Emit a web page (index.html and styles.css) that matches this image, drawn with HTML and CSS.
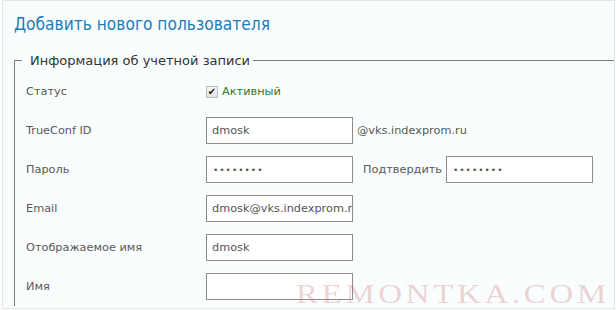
FILE: index.html
```html
<!DOCTYPE html>
<html lang="ru">

<head>
    <meta charset="UTF-8">
    <meta name="viewport" content="width=device-width, initial-scale=1.0">
    <title>Добавить нового пользователя</title>
    <link rel="stylesheet" href="styles.css">
</head>

<body>
    <div class="page">
        <h1 class="title">Добавить нового пользователя</h1>

        <fieldset class="account">
            <legend>Информация об учетной записи</legend>

            <div class="row">
                <label class="caption">Статус</label>
                <label class="check"><span class="box">&#10004;</span>Активный</label>
            </div>
            <div class="row">
                <label class="caption">TrueConf ID</label>
                <input class="field" type="text" value="dmosk">
                <span class="suffix">@vks.indexprom.ru</span>
            </div>
            <div class="row">
                <label class="caption">Пароль</label>
                <input class="field pass" type="password" value="12345678">
                <label class="confirm">Подтвердить</label>
                <input class="field pass" type="password" value="12345678">
            </div>
            <div class="row">
                <label class="caption">Email</label>
                <input class="field" type="text" value="dmosk@vks.indexprom.ru">
            </div>
            <div class="row">
                <label class="caption">Отображаемое имя</label>
                <input class="field" type="text" value="dmosk">
            </div>
            <div class="row">
                <label class="caption">Имя</label>
                <input class="field" type="text" value="">
            </div>
        </fieldset>

        <div class="watermark">REMONTKA.COM</div>
    </div>
</body>

</html>
```

FILE: styles.css
```css
html, body {
    margin: 0;
    padding: 0;
    overflow: hidden;
}

body {
    width: 616px;
    height: 310px;
    background: #fff;
    font-family: "DejaVu Sans", sans-serif;
}

.page {
    position: relative;
    box-sizing: border-box;
    height: 309px;
    margin-left: 2px;
    margin-right: 1px;
    border: 1px solid #e1e6e6;
    background: #f9fdfd;
    padding: 0 0 0 11px;
    overflow: hidden;
}

.title {
    margin: 0;
    padding-top: 13px;
    height: 52px;
    box-sizing: border-box;
    font-family: "DejaVu Sans Condensed", "DejaVu Sans", sans-serif;
    font-stretch: condensed;
    font-weight: normal;
    font-size: 17.2px;
    line-height: 20px;
    color: #1d7cb8;
}

.account {
    margin: 0 -20px 0 0;
    padding: 4px 0 0 11px;
    border: none;
    border-top: 1px solid #7b7b7b;
    border-left: 1px solid #7b7b7b;
    min-width: 0;
}

.account legend {
    padding: 0 3px 0 8px;
    margin-left: -4px;
    font-size: 13px;
    line-height: 15px;
    color: #333;
}

.row {
    display: flex;
    align-items: center;
    height: 39px;
    font-size: 11.3px;
    color: #585858;
}

.caption {
    width: 180px;
}

.check {
    display: flex;
    align-items: center;
    color: #2c7a2c;
}

.box {
    box-sizing: border-box;
    width: 12px;
    height: 12px;
    margin-right: 4px;
    border: 1px solid #bdbdbd;
    background: linear-gradient(#f7f7f7, #e2e2e2);
    color: #222;
    font-size: 10px;
    line-height: 10px;
    text-align: center;
}

.field {
    box-sizing: border-box;
    width: 147px;
    height: 27px;
    margin: 0;
    padding: 0 0 0 5px;
    border: 1px solid #8c8c8c;
    background: #fff;
    font-family: "DejaVu Sans", sans-serif;
    font-size: 11.3px;
    color: #555;
}

.pass {
    font-size: 9px;
    letter-spacing: 1px;
    padding-left: 6px;
}

.suffix {
    margin-left: 4px;
}

.confirm {
    margin: 0 4px 0 10px;
}

.watermark {
    position: absolute;
    left: 293px;
    top: 278px;
    font-family: "Liberation Serif", serif;
    font-size: 27px;
    letter-spacing: 3px;
    transform: scaleX(1.22);
    transform-origin: left center;
    color: rgba(205, 120, 120, 0.32);
    pointer-events: none;
}
```
